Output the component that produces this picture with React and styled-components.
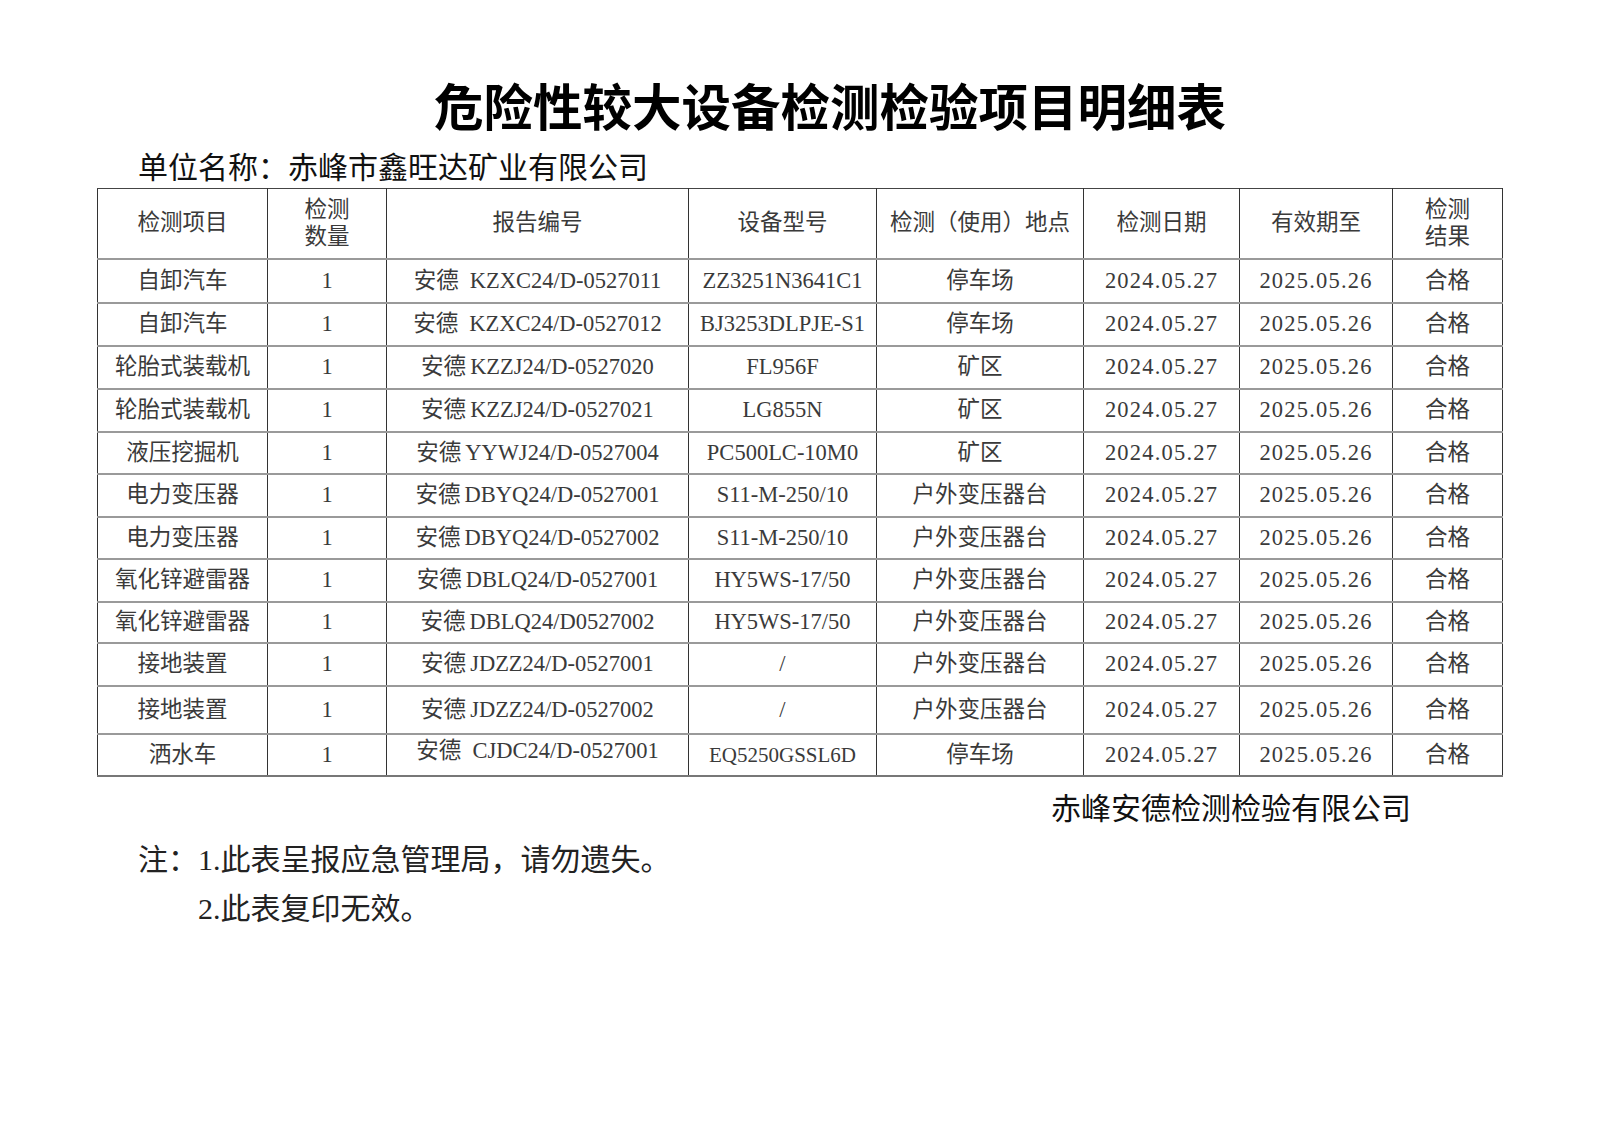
import styled, { createGlobalStyle } from "styled-components";

const GlobalStyle = createGlobalStyle`
  html, body {
    margin: 0;
    padding: 0;
    background: #fff;
  }
  body {
    font-family: "Noto Sans CJK SC", sans-serif;
    color: #111;
  }
`;

const columns = [170, 119, 302, 188, 207, 156, 153, 110];

const rows = [
  { h: 44, item: "自卸汽车", code: "KZXC24/D-0527011", wide: true, model: "ZZ3251N3641C1", place: "停车场" },
  { h: 43, item: "自卸汽车", code: "KZXC24/D-0527012", wide: true, model: "BJ3253DLPJE-S1", place: "停车场" },
  { h: 43, item: "轮胎式装载机", code: "KZZJ24/D-0527020", model: "FL956F", place: "矿区" },
  { h: 43, item: "轮胎式装载机", code: "KZZJ24/D-0527021", model: "LG855N", place: "矿区" },
  { h: 42, item: "液压挖掘机", code: "YYWJ24/D-0527004", model: "PC500LC-10M0", place: "矿区" },
  { h: 43, item: "电力变压器", code: "DBYQ24/D-0527001", model: "S11-M-250/10", place: "户外变压器台" },
  { h: 42, item: "电力变压器", code: "DBYQ24/D-0527002", model: "S11-M-250/10", place: "户外变压器台" },
  { h: 43, item: "氧化锌避雷器", code: "DBLQ24/D-0527001", model: "HY5WS-17/50", place: "户外变压器台" },
  { h: 41, item: "氧化锌避雷器", code: "DBLQ24/D0527002", model: "HY5WS-17/50", place: "户外变压器台" },
  { h: 43, item: "接地装置", code: "JDZZ24/D-0527001", model: "/", place: "户外变压器台" },
  { h: 48, item: "接地装置", code: "JDZZ24/D-0527002", model: "/", place: "户外变压器台" },
  { h: 42, item: "洒水车", code: "CJDC24/D-0527001", wide: true, model: "EQ5250GSSL6D", place: "停车场", raised: true },
];

function App() {
  return (
    <Page>
      <GlobalStyle />
      <Title>危险性较大设备检测检验项目明细表</Title>
      <UnitLine>单位名称：赤峰市鑫旺达矿业有限公司</UnitLine>
      <Sheet>
        <colgroup>
          {columns.map((w, i) => (
            <col key={i} style={{ width: w }} />
          ))}
        </colgroup>
        <thead>
          <Row $h={70}>
            <Head>检测项目</Head>
            <Head $tight>
              检测
              <br />
              数量
            </Head>
            <Head>报告编号</Head>
            <Head>设备型号</Head>
            <Head>检测（使用）地点</Head>
            <Head>检测日期</Head>
            <Head>有效期至</Head>
            <Head $tight>
              检测
              <br />
              结果
            </Head>
          </Row>
        </thead>
        <tbody>
          {rows.map((r, i) => (
            <Row key={i} $h={r.h}>
              <Cell>{r.item}</Cell>
              <Cell>1</Cell>
              <Cell $raised={r.raised}>
                <Issuer $wide={r.wide}>安德</Issuer>
                {r.code}
              </Cell>
              <Cell $small={r.raised}>{r.model}</Cell>
              <Cell>{r.place}</Cell>
              <Cell>
                <DateText>2024.05.27</DateText>
              </Cell>
              <Cell>
                <DateText>2025.05.26</DateText>
              </Cell>
              <Cell>合格</Cell>
            </Row>
          ))}
        </tbody>
      </Sheet>
      <Signature>赤峰安德检测检验有限公司</Signature>
      <Notes>
        <NoteLine>注：1.此表呈报应急管理局，请勿遗失。</NoteLine>
        <NoteLine $indent>2.此表复印无效。</NoteLine>
      </Notes>
    </Page>
  );
}

export default App;

const Page = styled.div`
  width: 1600px;
  min-height: 1131px;
  background: #fff;
  padding-top: 80px;
  box-sizing: border-box;
`;

const Title = styled.h1`
  margin: 0;
  padding-left: 60px;
  text-align: center;
  font-family: "Noto Sans CJK SC", sans-serif;
  font-weight: 700;
  font-size: 49.5px;
  line-height: 49px;
  color: #000;
`;

const UnitLine = styled.div`
  margin-top: 21px;
  padding-left: 138px;
  font-family: "Noto Sans CJK SC", sans-serif;
  font-size: 30px;
  line-height: 30px;
  color: #111;
`;

const Sheet = styled.table`
  margin: 8px 0 0 97px;
  width: 1405px;
  table-layout: fixed;
  border-collapse: collapse;
  font-family: "Liberation Serif", "Noto Sans CJK SC", serif;
  font-size: 22.5px;
  color: #3a3a3a;
`;

const Row = styled.tr`
  height: ${(p) => p.$h}px;
`;

const Head = styled.th`
  font-weight: 400;
  text-align: center;
  vertical-align: middle;
  padding: 0;
  line-height: ${(p) => (p.$tight ? "27px" : "30px")};
  border-left: 1px solid #333;
  border-right: 1px solid #333;
  border-top: 1px solid #444;
  border-bottom: 2px solid #9a9a9a;
`;

const Cell = styled.td`
  text-align: center;
  vertical-align: middle;
  padding: 0 0 ${(p) => (p.$raised ? "8px" : "0")} 0;
  font-size: ${(p) => (p.$small ? "21px" : "22.5px")};
  line-height: 28px;
  white-space: nowrap;
  border-left: 1px solid #333;
  border-right: 1px solid #333;
  border-bottom: 2px solid #9a9a9a;
  tr:last-child > & {
    border-bottom: 2px solid #777;
  }
`;

const Issuer = styled.span`
  margin-right: ${(p) => (p.$wide ? "11px" : "4px")};
`;

const DateText = styled.span`
  letter-spacing: 1.2px;
`;

const Signature = styled.div`
  margin-top: 14px;
  padding-right: 189px;
  text-align: right;
  font-family: "Noto Sans CJK SC", sans-serif;
  font-size: 30px;
  line-height: 30px;
  color: #111;
`;

const Notes = styled.div`
  margin-top: 24px;
  display: flex;
  flex-direction: column;
  gap: 19px;
`;

const NoteLine = styled.div`
  padding-left: ${(p) => (p.$indent ? "198px" : "138px")};
  font-family: "Liberation Serif", "Noto Sans CJK SC", serif;
  font-size: 30px;
  line-height: 30px;
  color: #222;
`;
